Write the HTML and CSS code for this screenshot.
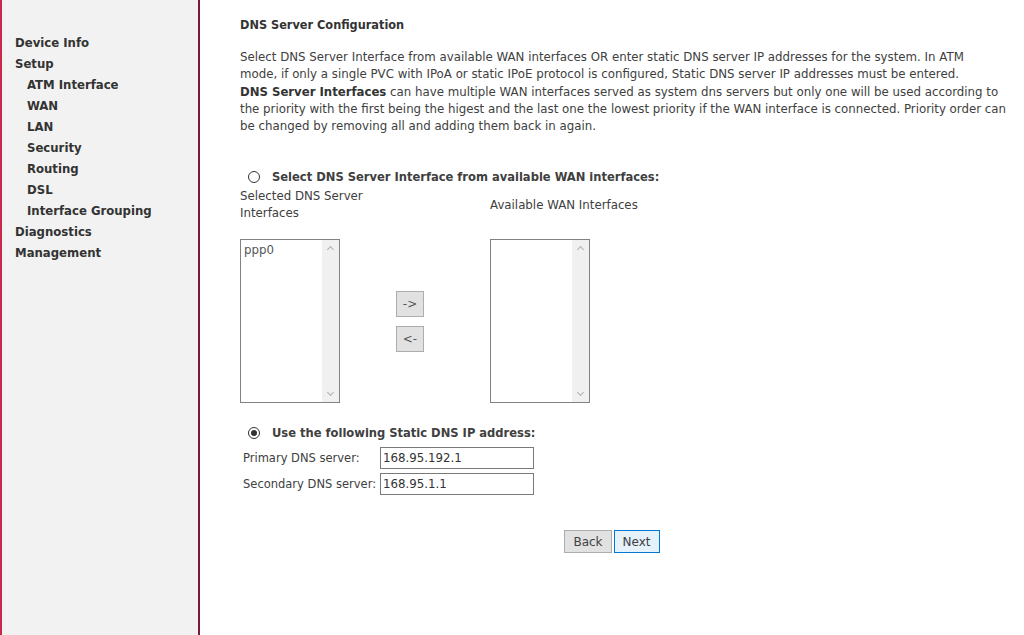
FILE: index.html
```html
<!DOCTYPE html>
<html>
<head>
<meta charset="utf-8">
<link rel="stylesheet" href="styles.css">
</head>
<body>
<div class="page">
  <nav class="sidebar">
    <a class="item" href="#">Device Info</a>
    <a class="item" href="#">Setup</a>
    <a class="item sub" href="#">ATM Interface</a>
    <a class="item sub" href="#">WAN</a>
    <a class="item sub" href="#">LAN</a>
    <a class="item sub" href="#">Security</a>
    <a class="item sub" href="#">Routing</a>
    <a class="item sub" href="#">DSL</a>
    <a class="item sub" href="#">Interface Grouping</a>
    <a class="item" href="#">Diagnostics</a>
    <a class="item" href="#">Management</a>
  </nav>
  <main class="main">
    <div class="content">
      <h1 class="title">DNS Server Configuration</h1>
      <p class="desc">Select DNS Server Interface from available WAN interfaces OR enter static DNS server IP addresses for the system. In ATM<br>mode, if only a single PVC with IPoA or static IPoE protocol is configured, Static DNS server IP addresses must be entered.<br><b>DNS Server Interfaces</b> can have multiple WAN interfaces served as system dns servers but only one will be used according to<br>the priority with the first being the higest and the last one the lowest priority if the WAN interface is connected. Priority order can<br>be changed by removing all and adding them back in again.</p>

      <div class="radio-row first">
        <span class="radio"></span>
        <span class="radio-label">Select DNS Server Interface from available WAN interfaces:</span>
      </div>

      <div class="iface-grid">
        <div class="col-label left">Selected DNS Server Interfaces</div>
        <div></div>
        <div class="col-label">Available WAN Interfaces</div>

        <div class="listbox">
          <div class="list-items"><div class="opt">ppp0</div></div>
          <div class="scroll"><span class="chev up"></span><span class="chev down"></span></div>
        </div>
        <div class="move-btns">
          <button class="mv">-&gt;</button>
          <button class="mv">&lt;-</button>
        </div>
        <div class="listbox">
          <div class="list-items"></div>
          <div class="scroll"><span class="chev up"></span><span class="chev down"></span></div>
        </div>
      </div>

      <div class="radio-row second">
        <span class="radio checked"></span>
        <span class="radio-label">Use the following Static DNS IP address:</span>
      </div>

      <div class="dns-form">
        <label class="dns-label">Primary DNS server:</label>
        <input class="dns-input" type="text" value="168.95.192.1">
        <label class="dns-label">Secondary DNS server:</label>
        <input class="dns-input" type="text" value="168.95.1.1">
      </div>
    </div>
    <div class="actions">
      <button class="btn">Back</button>
      <button class="btn primary">Next</button>
    </div>
  </main>
</div>
</body>
</html>
```

FILE: styles.css
```css
html, body {
  margin: 0;
  padding: 0;
  background: #ffffff;
}
body {
  font-family: "DejaVu Sans", sans-serif;
  font-size: 11.8px;
  color: #404040;
}
.page {
  display: flex;
  height: 635px;
  overflow: hidden;
}
.sidebar {
  width: 196px;
  flex: none;
  background: #f2f2f2;
  border-left: 2px solid #c8284c;
  border-right: 2px solid #7b1b3b;
  padding-top: 32px;
  box-sizing: content-box;
}
.item {
  display: block;
  font-family: "DejaVu Sans Condensed", "DejaVu Sans", sans-serif;
  font-weight: bold;
  font-size: 13px;
  line-height: 21px;
  padding-left: 13px;
  color: #333333;
  text-decoration: none;
}
.item.sub {
  padding-left: 25px;
}
.main {
  flex: 1;
}
.content {
  padding-left: 40px;
}
.title {
  margin: 16px 0 0;
  font-family: "DejaVu Sans Condensed", "DejaVu Sans", sans-serif;
  font-size: 12.6px;
  line-height: 17px;
  font-weight: bold;
  color: #333333;
}
.desc {
  margin: 16px 0 0;
  width: 780px;
  line-height: 17px;
  color: #404040;
}
.desc b {
  font-family: "DejaVu Sans Condensed", "DejaVu Sans", sans-serif;
  font-size: 13px;
  color: #333333;
}
.radio-row {
  display: flex;
  align-items: center;
  height: 17px;
  padding-left: 8px;
}
.radio-row.first {
  margin-top: 33px;
}
.radio-row.second {
  margin-top: 21px;
}
.radio {
  width: 10px;
  height: 10px;
  border: 1px solid #333333;
  border-radius: 50%;
  background: #ffffff;
  position: relative;
  flex: none;
}
.radio.checked::after {
  content: "";
  position: absolute;
  left: 2px;
  top: 2px;
  width: 6px;
  height: 6px;
  border-radius: 50%;
  background: #333333;
}
.radio-label {
  margin-left: 12px;
  font-family: "DejaVu Sans Condensed", "DejaVu Sans", sans-serif;
  font-weight: bold;
  font-size: 12.8px;
  color: #404040;
}
.iface-grid {
  display: grid;
  grid-template-columns: 156px 94px auto;
  grid-template-rows: 34px auto;
  row-gap: 17px;
  margin-top: 3px;
}
.col-label {
  align-self: center;
  line-height: 17px;
  color: #404040;
}
.col-label.left {
  width: 130px;
}
.listbox {
  width: 98px;
  height: 162px;
  border: 1px solid #828282;
  display: flex;
  background: #ffffff;
}
.list-items {
  flex: 1;
}
.opt {
  padding: 2px 0 0 3px;
  line-height: 16px;
  color: #555555;
}
.scroll {
  width: 17px;
  background: #f0f0f0;
  position: relative;
}
.chev {
  position: absolute;
  left: 6px;
  width: 4px;
  height: 4px;
  border-left: 1px solid #b0b0b0;
  border-top: 1px solid #b0b0b0;
}
.chev.up {
  top: 7px;
  transform: rotate(45deg);
}
.chev.down {
  bottom: 7px;
  transform: rotate(225deg);
}
.move-btns {
  align-self: center;
  display: flex;
  flex-direction: column;
  gap: 9px;
}
.mv {
  width: 28px;
  height: 26px;
  padding: 0;
  background: #e1e1e1;
  border: 1px solid #adadad;
  font-family: inherit;
  font-size: 12px;
  color: #555555;
}
.dns-form {
  display: grid;
  grid-template-columns: 140px 154px;
  row-gap: 4px;
  margin-top: 6px;
  align-items: center;
}
.dns-label {
  padding-left: 3px;
  font-size: 11.5px;
  white-space: nowrap;
  color: #404040;
}
.dns-input {
  width: 154px;
  height: 22px;
  box-sizing: border-box;
  border: 1px solid #7a7a7a;
  padding: 0 2px;
  font-family: inherit;
  font-size: 11.8px;
  color: #333333;
  margin: 0;
}
.actions {
  display: flex;
  justify-content: center;
  gap: 2px;
  margin-top: 35px;
}
.btn {
  height: 23px;
  padding: 0 8px;
  background: #e1e1e1;
  border: 1px solid #adadad;
  font-family: inherit;
  font-size: 12px;
  color: #404040;
}
.btn.primary {
  background: #e5f1fb;
  border-color: #0078d7;
}
```
